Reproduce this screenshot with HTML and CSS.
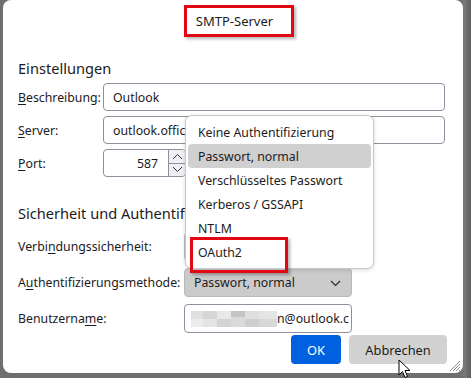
FILE: index.html
```html
<!DOCTYPE html>
<html lang="de">
<head>
<meta charset="utf-8">
<title>SMTP-Server</title>
<link rel="stylesheet" href="styles.css">
</head>
<body>
<div class="screen">
  <div class="dialog">
    <header class="title-row"><span class="title">SMTP-Server</span></header>

    <section class="section first">
      <h2 class="heading">Einstellungen</h2>
      <div class="grid grid-a">
        <label class="lbl"><u>B</u>eschreibung:</label>
        <div class="field wide">Outlook</div>
        <label class="lbl"><u>S</u>erver:</label>
        <div class="field wide">outlook.office365.com</div>
        <label class="lbl"><u>P</u>ort:</label>
        <div class="field port">
          <span class="num">587</span>
          <span class="spin">
            <span class="spin-btn"><svg width="11" height="7" viewBox="0 0 11 7"><path d="M1 6 L5.5 1.5 L10 6" fill="none" stroke="#333" stroke-width="1"/></svg></span>
            <span class="spin-btn"><svg width="11" height="7" viewBox="0 0 11 7"><path d="M1 1 L5.5 5.5 L10 1" fill="none" stroke="#333" stroke-width="1"/></svg></span>
          </span>
        </div>
      </div>
    </section>

    <section class="section second">
      <h2 class="heading">Sicherheit und Authentifizierung</h2>
      <div class="grid grid-b">
        <label class="lbl">Verbi<u>n</u>dungssicherheit:</label>
        <div class="select plain">STARTTLS</div>
        <label class="lbl">A<u>u</u>thentifizierungsmethode:</label>
        <div class="select">
          <span>Passwort, normal</span>
          <svg class="chev" width="11" height="7" viewBox="0 0 11 7"><path d="M1 1 L5.5 5.5 L10 1" fill="none" stroke="#2b2a33" stroke-width="1.2"/></svg>
        </div>
        <label class="lbl">Benutzerna<u>m</u>e:</label>
        <div class="field user">
          <span class="blur">
            <i class="px p1"></i><i class="px p2"></i><i class="px p3"></i><i class="px p4"></i><i class="px p5"></i><i class="px p6"></i>
          </span><span class="mail">n@outlook.c</span>
        </div>
      </div>
    </section>

    <footer class="buttons">
      <button class="btn primary">OK</button>
      <button class="btn secondary">Abbrechen</button>
    </footer>

    <ul class="popup">
      <li class="opt">Keine Authentifizierung</li>
      <li class="opt selected">Passwort, normal</li>
      <li class="opt">Verschlüsseltes Passwort</li>
      <li class="opt">Kerberos / GSSAPI</li>
      <li class="opt">NTLM</li>
      <li class="opt">OAuth2</li>
    </ul>
    <div class="mark"></div>

    <svg class="grip" width="13" height="13" viewBox="0 0 13 13">
      <path d="M12 2 L2 12 M12 5 L5 12 M12 8 L8 12 M12 11 L11 12" stroke="#8a8a8a" stroke-width="1"/>
    </svg>
  </div>
  <svg class="cursor" width="14" height="20" viewBox="0 0 14 20">
    <path d="M1 1 L1 16 L4.5 12.5 L7 18.5 L9.5 17.5 L7 11.5 L12 11.5 Z" fill="#fff" stroke="#000" stroke-width="1" stroke-linejoin="round"/>
  </svg>
</div>
</body>
</html>
```
FILE: styles.css
```css
* { box-sizing: border-box; }
html, body { margin: 0; padding: 0; }
body {
  width: 471px;
  height: 378px;
  overflow: hidden;
  background: #707070;
  font-family: "Noto Sans", "Open Sans", sans-serif;
  font-size: 12.3px;
  color: #1c1b22;
}
.screen {
  position: relative;
  width: 471px;
  height: 378px;
  background: linear-gradient(to right, #6f6f6f 0, #6f6f6f 462px, #7a7a7a 464px, #5e5e5e 471px);
}
.dialog {
  position: relative;
  margin-left: 3px;
  width: 460px;
  height: 373px;
  background: #fff;
  border-radius: 8px;
  padding: 0 17px 0 15px;
  display: flex;
  flex-direction: column;
}
.title-row {
  display: flex;
  justify-content: center;
  padding-top: 5px;
}
.title {
  display: inline-block;
  margin-left: 14px;
  height: 32px;
  border: 3px solid #e30613;
  box-shadow: 2px 2px 3px rgba(0,0,0,0.3);
  padding: 4px 18px 0 9px;
  font-size: 13px;
  line-height: 18px;
}
.heading {
  margin: 0;
  font-weight: normal;
  font-size: 14.6px;
  line-height: 20px;
  height: 20px;
}
.section.first .heading { margin-top: 21px; }
.section.second .heading { margin-top: 26px; }
.grid {
  display: grid;
  align-items: center;
}
.grid-a {
  margin-top: 5px;
  grid-template-columns: 85px 342px;
  row-gap: 5px;
}
.grid-b {
  margin-top: 9px;
  grid-template-columns: 166px 168px;
  row-gap: 7px;
}
.lbl { line-height: 16px; padding-top: 1px; }
.lbl u { text-decoration-thickness: 1px; text-underline-offset: 2px; }
.field {
  height: 28px;
  border: 1px solid #8f8f9d;
  border-radius: 4px;
  background: #fff;
  display: flex;
  align-items: center;
  padding-left: 9px;
  white-space: nowrap;
  overflow: hidden;
}
.field.port {
  width: 83px;
  padding-left: 0;
  justify-content: flex-end;
}
.num { margin-right: 10px; }
.spin {
  display: flex;
  flex-direction: column;
  height: 26px;
  width: 17px;
  border-left: 1px solid #8f8f9d;
}
.spin-btn {
  flex: 1;
  display: flex;
  align-items: center;
  justify-content: center;
  background: #f0f0f4;
}
.spin-btn + .spin-btn { border-top: 1px solid #8f8f9d; }
.select {
  height: 29px;
  border-radius: 4px;
  background: #cbcbcb;
  border: 1px solid #b9b9b9;
  display: flex;
  align-items: center;
  justify-content: space-between;
  padding: 0 10px 0 9px;
}
.select.plain { background: #e9e9ed; }
.chev { margin-top: 1px; }
.field.user { height: 29px; padding-left: 6px; }
.blur { display: inline-flex; height: 16px; }
.px { display: block; width: 14px; height: 16px; }
.p1 { background: linear-gradient(#e0e0e0 50%, #ececec 50%); width: 12px; }
.p2 { background: linear-gradient(#d6d6d6 50%, #e4e4e4 50%); }
.p3 { background: linear-gradient(#e8e8e8 50%, #d4d4d4 50%); }
.p4 { background: linear-gradient(#c4c4c4 40%, #dadada 40%); }
.p5 { background: linear-gradient(#dedede 50%, #cfcfcf 50%); }
.p6 { background: linear-gradient(#e4e4e4 50%, #d8d8d8 50%); width: 18px; }
.mail { margin-left: 0; }
.buttons {
  display: flex;
  justify-content: flex-end;
  gap: 8px;
  margin-top: 2px;
  margin-right: -1px;
}
.btn {
  font-family: inherit;
  font-size: 12.8px;
  height: 29px;
  border: none;
  border-radius: 4px;
  padding: 0;
}
.btn.primary { width: 50px; background: #0061e0; color: #fff; }
.btn.secondary { width: 98px; background: #d2d2d2; color: #1c1b22; }
.popup {
  position: absolute;
  left: 182px;
  top: 115px;
  width: 189px;
  margin: 0;
  padding: 4px 2px;
  list-style: none;
  background: #fff;
  border: 1px solid #c8c8c8;
  border-radius: 7px;
  box-shadow: 0 1px 4px rgba(0,0,0,0.15);
}
.opt {
  height: 24px;
  line-height: 26px;
  padding-left: 10px;
  border-radius: 4px;
  white-space: nowrap;
  overflow: visible;
}
.opt.selected { background: #d0d0d0; }
.mark {
  position: absolute;
  left: 187px;
  top: 237px;
  width: 98px;
  height: 36px;
  border: 3px solid #e30613;
  box-shadow: 2px 2px 3px rgba(0,0,0,0.3);
}
.grip {
  position: absolute;
  right: 2px;
  bottom: 1px;
}
.cursor {
  position: absolute;
  left: 398px;
  top: 359px;
}
```
